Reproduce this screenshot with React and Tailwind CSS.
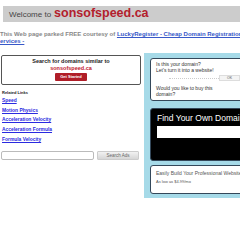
import React from 'react';

const links = ['Speed', 'Motion Physics', 'Acceleration Velocity', 'Acceleration Formula', 'Formula Velocity'];

export default function App() {
  return (
    <div className="w-[240px] h-[240px] overflow-hidden bg-white font-['Liberation_Sans',Arial,sans-serif]">
      {/* Header */}
      <div className="pt-[6px] pl-[3px]">
        <div className="w-[300px] h-[16px] bg-[#cccccc] flex items-end pl-[6px] pb-[2px]">
          <span className="text-[8px] leading-[10px] text-[#444]">Welcome to</span>
          <span className="ml-[3px] text-[12.5px] leading-[13px] font-bold text-[#b3202c]">sonsofspeed.ca</span>
        </div>
      </div>

      {/* Parked notice */}
      <div className="mt-[9px] text-[6px] leading-[7px] font-bold text-[#888] whitespace-nowrap">
        <div>
          This Web page parked FREE courtesy of{' '}
          <span className="text-[#3858c8] underline">LuckyRegister - Cheap Domain Registration</span>
        </div>
        <div className="text-[#3858c8] underline">ervices -</div>
      </div>

      <div className="mt-[8px] flex w-[320px]">
        {/* Left column */}
        <div className="w-[140px] ml-[1px] pt-[2px]">
          <div className="h-[30px] border-[1.5px] border-[#555] rounded-[2px] flex flex-col items-center pt-[2px]">
            <div className="text-[5.5px] leading-[7px] font-bold text-[#222]">Search for domains similar to</div>
            <div className="text-[5.5px] leading-[7px] font-bold text-[#c0202c]">sonsofspeed.ca</div>
            <div className="mt-[1px] w-[32px] h-[8px] bg-[#b01e28] rounded-[1px] flex items-center justify-center text-[4px] font-bold text-white">
              Get Started
            </div>
          </div>

          <div className="mt-[5px] ml-[1px] text-[4px] leading-[6px] font-bold text-[#222]">Related Links</div>
          <div className="ml-[1px] mt-[1px] flex flex-col">
            {links.map((l) => (
              <div key={l} className="h-[9.7px] text-[4.9px] leading-[7px] font-bold text-[#2a2ae0] underline">
                {l}
              </div>
            ))}
          </div>

          <div className="mt-[6px] flex items-center">
            <div className="w-[93px] h-[9px] border border-[#bbb] rounded-[2px] bg-white" />
            <div className="ml-[3px] w-[42px] h-[9px] bg-gradient-to-b from-[#f2f2f2] to-[#d6d6d6] border border-[#ccc] rounded-[1px] flex items-center justify-center text-[4.5px] text-[#666]">
              Search Ads
            </div>
          </div>
        </div>

        {/* Right column */}
        <div className="ml-[3px] w-[120px] bg-[#a6dae8] pt-[5px] pb-[4px] pl-[6px]">
          <div className="h-[43px] bg-white border-[1.5px] border-[#34485a] rounded-[3px] pl-[5px] pt-[2px] relative text-[5px] leading-[6px] text-[#333]">
            <div>Is this your domain?</div>
            <div>Let's turn it into a website!</div>
            <div className="absolute left-[18px] right-0 top-[19px] border-t border-dotted border-[#ccc]" />
            <div className="absolute left-[68px] top-[16px] w-[21px] h-[6px] bg-[#f4f4f4] border border-[#ddd] flex items-center justify-center text-[3.5px] text-[#555]">
              OK
            </div>
            <div className="mt-[12px]">Would you like to buy this</div>
            <div>domain?</div>
          </div>

          <div className="mt-[7px] h-[53px] bg-black rounded-[3px] border border-[#34485a] pl-[6px] pt-[3px]">
            <div className="text-[8.5px] leading-[12px] text-white whitespace-nowrap">Find Your Own Domain</div>
            <div className="mt-[2px] h-[12px] bg-white" />
          </div>

          <div className="mt-[4px] h-[29px] bg-white border-[1.5px] border-[#34485a] rounded-[3px] pl-[5px] pt-[4px] text-[#555] whitespace-nowrap">
            <div className="text-[5px] leading-[7px]">Easily Build Your Professional Website</div>
            <div className="mt-[2px] text-[4px] leading-[6px]">As low as $4.99/mo</div>
          </div>
        </div>
      </div>
    </div>
  );
}
